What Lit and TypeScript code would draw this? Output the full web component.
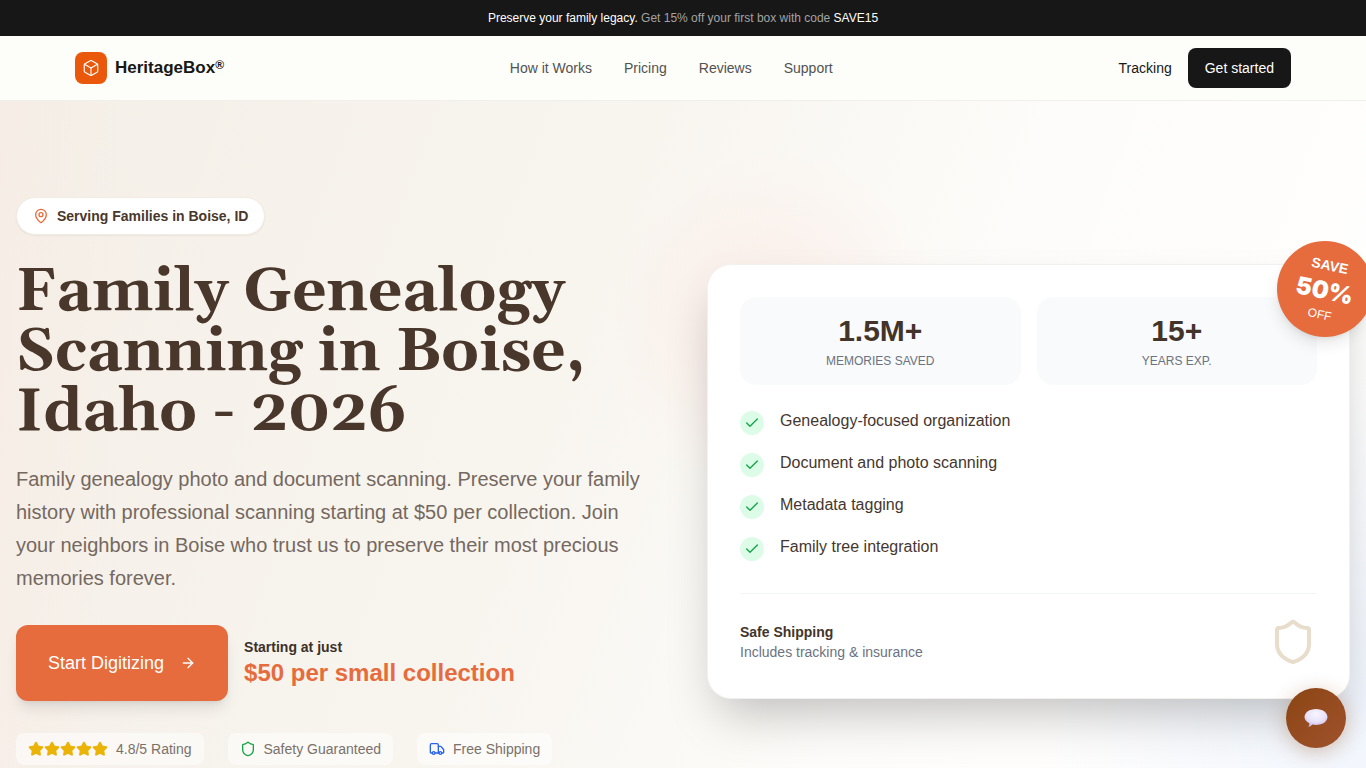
import { LitElement, html, css, svg } from "lit";
import { customElement } from "lit/decorators.js";

const icon = (cls: string, body: unknown) => html`<svg class=${cls} viewBox="0 0 24 24" fill="none" stroke="currentColor" stroke-width="2" stroke-linecap="round" stroke-linejoin="round" aria-hidden="true">${body}</svg>`;

const box = svg`<path d="M21 8a2 2 0 0 0-1-1.73l-7-4a2 2 0 0 0-2 0l-7 4A2 2 0 0 0 3 8v8a2 2 0 0 0 1 1.73l7 4a2 2 0 0 0 2 0l7-4A2 2 0 0 0 21 16Z"/><path d="m3.3 7 8.7 5 8.7-5"/><path d="M12 22V12"/>`;
const pin = svg`<path d="M20 10c0 4.993-5.539 10.193-7.399 11.799a1 1 0 0 1-1.202 0C9.539 20.193 4 14.993 4 10a8 8 0 0 1 16 0"/><circle cx="12" cy="10" r="3"/>`;
const arrow = svg`<path d="M5 12h14"/><path d="m12 5 7 7-7 7"/>`;
const shield = svg`<path d="M20 13c0 5-3.500 7.500-7.660 8.950a1 1 0 0 1-.670-.010C7.500 20.500 4 18 4 13V6a1 1 0 0 1 1-1c2 0 4.500-1.200 6.240-2.720a1.170 1.170 0 0 1 1.520 0C14.510 3.810 17 5 19 5a1 1 0 0 1 1 1z"/>`;
const truck = svg`<path d="M14 18V6a2 2 0 0 0-2-2H4a2 2 0 0 0-2 2v11a1 1 0 0 0 1 1h2"/><path d="M15 18H9"/><path d="M19 18h2a1 1 0 0 0 1-1v-3.650a1 1 0 0 0-.220-.624l-3.480-4.350A1 1 0 0 0 17.520 8H14"/><circle cx="17" cy="18" r="2"/><circle cx="7" cy="18" r="2"/>`;
const star = svg`<path d="M11.525 2.295a.53.53 0 0 1 .95 0l2.310 4.679a2.123 2.123 0 0 0 1.595 1.160l5.166.756a.53.53 0 0 1 .294.904l-3.736 3.638a2.123 2.123 0 0 0-.611 1.878l.882 5.140a.53.53 0 0 1-.771.560l-4.618-2.428a2.122 2.122 0 0 0-1.973 0L6.396 21.010a.53.53 0 0 1-.770-.560l.881-5.139a2.122 2.122 0 0 0-.611-1.879L2.160 9.795a.53.53 0 0 1 .294-.906l5.165-.755a2.122 2.122 0 0 0 1.597-1.160z"/>`;
const tick = svg`<path d="M20 6 9 17l-5-5"/>`;

@customElement("app-root")
export class AppRoot extends LitElement {
  static styles = css`
    :host {
      display: block;
      min-height: 100vh;
      font-family: "Liberation Sans", Arial, sans-serif;
      font-size: 14px;
      line-height: 20px;
      color: #4a372b;
      overflow-x: clip;
    }
    * { box-sizing: border-box; margin: 0; }
    a { color: inherit; text-decoration: none; }
    button { font: inherit; border: 0; cursor: pointer; }
    svg { display: block; flex: none; }

    .promo { background: #171717; color: #a3a3a3; text-align: center; font-size: 12px; padding: 8px 16px; }
    .promo strong { color: #fff; font-weight: 500; }

    .header { background: #fdfef9; border-bottom: 1px solid #efefeb; }
    .bar { max-width: 1280px; height: 64px; margin: 0 auto; padding: 0 32px; display: flex; align-items: center; justify-content: space-between; }
    .brand { display: flex; align-items: center; gap: 8px; color: #171717; font-size: 17px; font-weight: 700; line-height: 28px; }
    .brand sup { font-size: 12px; line-height: 0; vertical-align: 4px; }
    .mark { width: 32px; height: 32px; border-radius: 8px; background: #ea580c; color: #fff; display: grid; place-items: center; }
    .nav { display: flex; gap: 32px; color: #525252; }
    .actions { display: flex; align-items: center; gap: 16px; color: #171717; }
    .start { background: #171717; color: #fff; padding: 10px 17px; border-radius: 8px; }

    .hero {
      background:
        radial-gradient(circle at 770px 220px, rgba(252, 222, 216, 0.45), rgba(252, 222, 216, 0) 170px),
        radial-gradient(circle at 100% 600px, rgba(236, 242, 252, 0.8), rgba(236, 242, 252, 0) 320px),
        linear-gradient(to right, rgba(250, 228, 224, 0.2), rgba(250, 228, 224, 0) 140px),
        linear-gradient(110deg, #f4efe7 0%, #f8f5ef 40%, #fdfcfa 65%, #fff 100%);
    }
    .wrap { max-width: 1400px; margin: 0 auto; padding: 96px 16px; display: grid; grid-template-columns: minmax(0, 1fr) minmax(0, 1fr); gap: 48px; align-items: center; }

    .place { display: inline-flex; align-items: center; gap: 8px; background: #fff; border: 1px solid #f0ebe3; border-radius: 20px; padding: 8px 16px; font-weight: 700; box-shadow: 0 1px 2px rgba(0, 0, 0, 0.05); vertical-align: top; }
    .title { font-family: Georgia, Gelasio, "Liberation Serif", serif; font-size: 60px; line-height: 60px; font-weight: 700; margin: 28px 0 20px; }
    .lead { font-size: 20px; line-height: 33px; color: #756860; }
    .offer { display: flex; align-items: center; gap: 16px; margin: 30px 0 32px; }
    .cta { display: flex; align-items: center; gap: 16px; height: 76px; padding: 0 32px; border-radius: 12px; background: #e66b3d; color: #fff; font-size: 18px; line-height: 28px; box-shadow: 0 10px 15px -3px rgba(0, 0, 0, 0.1), 0 4px 6px -4px rgba(0, 0, 0, 0.1); }
    .from { font-weight: 700; color: #3d3029; }
    .price { font-size: 24px; line-height: 32px; font-weight: 700; color: #e66b3d; }
    .trust { display: flex; flex-wrap: wrap; gap: 24px; list-style: none; padding: 0; color: #7a716a; }
    .chip { display: flex; align-items: center; gap: 8px; padding: 6px 12px; border-radius: 8px; background: rgba(255, 255, 255, 0.5); }
    .stars { display: flex; color: #eab308; }
    .star { width: 16px; height: 16px; fill: currentColor; }
    .i16 { width: 16px; height: 16px; }
    .thin { width: 18px; height: 18px; stroke-width: 1.5; }
    .orange { color: #e66b3d; }
    .green { color: #16a34a; }
    .blue { color: #2563eb; }

    .card { position: relative; background: #fff; border: 1px solid #f3f1ee; border-radius: 24px; padding: 32px; box-shadow: 0 25px 50px -12px rgba(0, 0, 0, 0.25); }
    .stats { display: grid; grid-template-columns: 1fr 1fr; gap: 16px; }
    .stat { background: #f8fafb; border-radius: 16px; padding: 16px; text-align: center; }
    .figure { font-size: 30px; line-height: 36px; font-weight: 700; color: #43342a; }
    .caption { margin-top: 4px; font-size: 12px; line-height: 16px; color: #6b7280; text-transform: uppercase; }
    .features { list-style: none; padding: 0; margin: 24px 0 32px; display: grid; gap: 16px; font-size: 16px; line-height: 24px; }
    .feature { display: flex; gap: 16px; color: #45372f; }
    .check { width: 24px; height: 24px; margin-top: 2px; border-radius: 50%; background: #dcfce7; color: #16a34a; display: grid; place-items: center; }
    .ship { display: flex; align-items: center; justify-content: space-between; border-top: 1px solid #f3f4f6; padding-top: 24px; color: #6b7280; }
    .ship strong { display: block; color: #43342a; }
    .guard { width: 48px; height: 48px; color: #e8dccb; }
    .save { position: absolute; top: -24px; right: -24px; width: 96px; height: 96px; border-radius: 50%; background: #e66b3d; color: #fff; display: flex; flex-direction: column; align-items: center; justify-content: center; transform: rotate(12deg); box-shadow: 0 10px 15px -3px rgba(0, 0, 0, 0.1), 0 4px 6px -4px rgba(0, 0, 0, 0.1); }
    .save-top { font-weight: 700; }
    .save-mid { font-family: "Arial Black", Inter, sans-serif; font-size: 24px; line-height: 32px; font-weight: 900; }
    .save-end { font-size: 12px; line-height: 16px; }

    .chat { position: fixed; right: 20px; bottom: 20px; width: 60px; height: 60px; padding: 0; border-radius: 50%; background: linear-gradient(135deg, #8b4513, #a0522d); display: grid; place-items: center; box-shadow: 0 4px 20px rgba(139, 69, 19, 0.3); }
  `;

  render() {
    return html`
      <div class="promo"><strong>Preserve your family legacy.</strong> Get 15% off your first box with code <strong>SAVE15</strong></div>
      <header class="header">
        <div class="bar">
          <a class="brand" href="#"><span class="mark">${icon("thin", box)}</span><span>HeritageBox<sup>®</sup></span></a>
          <nav class="nav">
            ${["How it Works", "Pricing", "Reviews", "Support"].map((t) => html`<a href="#">${t}</a>`)}
          </nav>
          <div class="actions"><a href="#">Tracking</a><button class="start">Get started</button></div>
        </div>
      </header>
      <main class="hero">
        <div class="wrap">
          <section>
            <span class="place"><span class="orange">${icon("i16", pin)}</span>Serving Families in Boise, ID</span>
            <h1 class="title">Family Genealogy Scanning in Boise, Idaho - 2026</h1>
            <p class="lead">Family genealogy photo and document scanning. Preserve your family history with professional scanning starting at $50 per collection. Join your neighbors in Boise who trust us to preserve their most precious memories forever.</p>
            <div class="offer">
              <button class="cta">Start Digitizing ${icon("i16", arrow)}</button>
              <div><p class="from">Starting at just</p><p class="price">$50 per small collection</p></div>
            </div>
            <ul class="trust">
              <li class="chip"><span class="stars">${[1, 2, 3, 4, 5].map(() => icon("star", star))}</span>4.8/5 Rating</li>
              <li class="chip"><span class="green">${icon("i16", shield)}</span>Safety Guaranteed</li>
              <li class="chip"><span class="blue">${icon("i16", truck)}</span>Free Shipping</li>
            </ul>
          </section>
          <section class="card">
            <div class="stats">
              <div class="stat"><p class="figure">1.5M+</p><p class="caption">Memories Saved</p></div>
              <div class="stat"><p class="figure">15+</p><p class="caption">Years Exp.</p></div>
            </div>
            <ul class="features">
              ${["Genealogy-focused organization", "Document and photo scanning", "Metadata tagging", "Family tree integration"].map(
                (t) => html`<li class="feature"><span class="check">${icon("i16", tick)}</span>${t}</li>`
              )}
            </ul>
            <div class="ship">
              <p><strong>Safe Shipping</strong>Includes tracking &amp; insurance</p>
              ${icon("guard", shield)}
            </div>
            <div class="save"><span class="save-top">SAVE</span><span class="save-mid">50%</span><span class="save-end">OFF</span></div>
          </section>
        </div>
      </main>
      <button class="chat" aria-label="Open chat">
        <svg width="24" height="18" viewBox="0 0 24 18" aria-hidden="true">
          <defs><radialGradient id="bubble" cx="0.5" cy="0.3" r="0.7"><stop offset="0" stop-color="#f8f5ff"/><stop offset="0.6" stop-color="#e9e2f8"/><stop offset="1" stop-color="#c9b8e8"/></radialGradient></defs>
          <path fill="url(#bubble)" d="M12 0C18.500 0 23.500 3.600 23.500 8S18.500 16 12 16c-1.300 0-2.500-.150-3.600-.400C7.500 16.700 6 17.600 4.300 17.700c.8-1 1.200-2.200 1-3.400C2.400 12.900.5 10.600.5 8 .5 3.600 5.500 0 12 0Z"/>
        </svg>
      </button>
    `;
  }
}
